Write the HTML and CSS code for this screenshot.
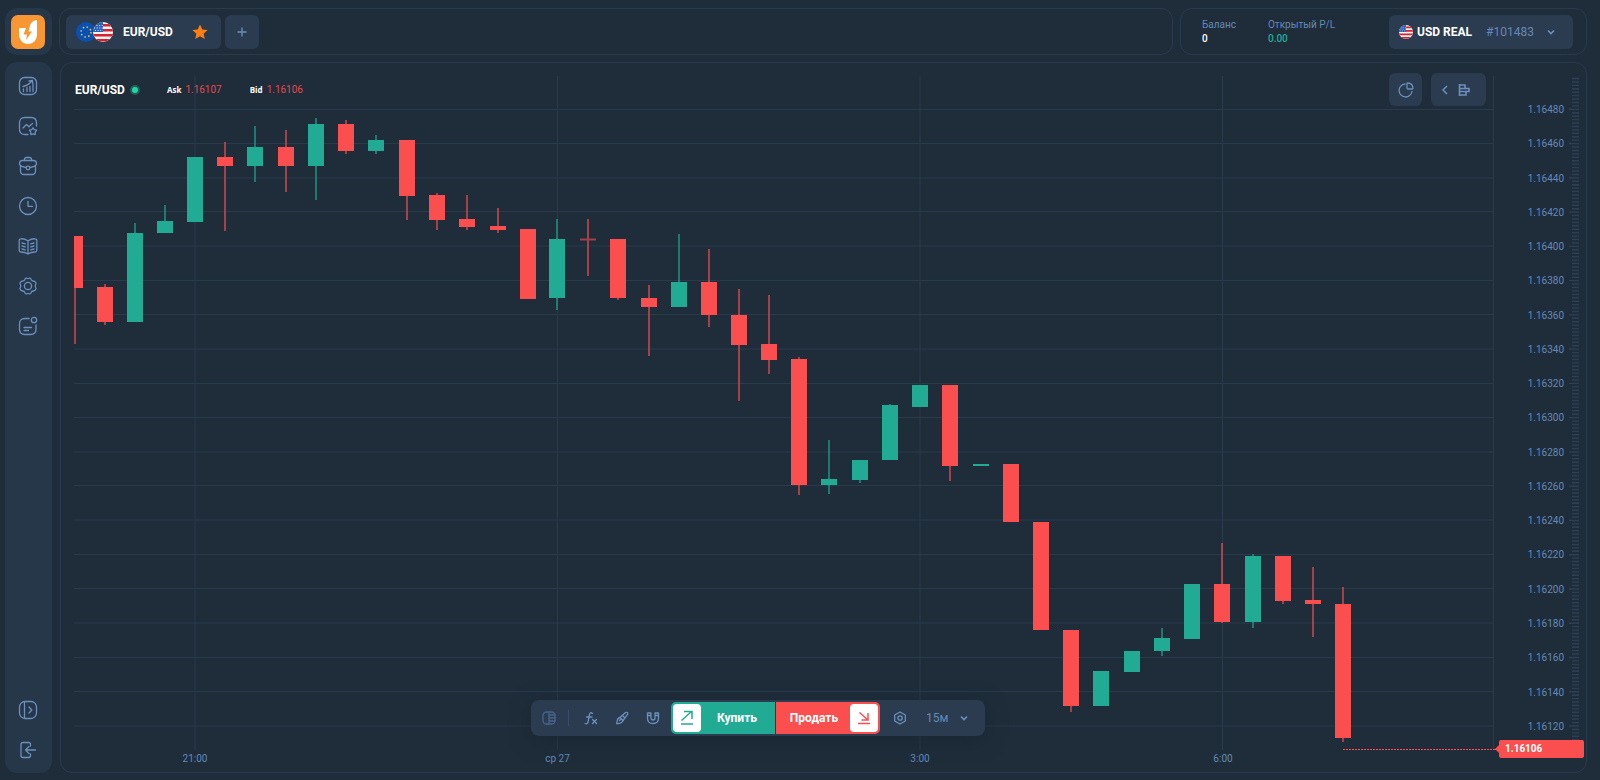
FILE: index.html
```html
<!DOCTYPE html>
<html lang="ru">
<head>
<meta charset="utf-8">
<title>EUR/USD</title>
<link rel="stylesheet" href="styles.css">
</head>
<body>
<svg class="defs" aria-hidden="true">
  <symbol id="flag-us" viewBox="0 0 20 20">
    <clipPath id="disc"><circle cx="10" cy="10" r="10"/></clipPath>
    <g clip-path="url(#disc)">
      <rect width="20" height="20" fill="#f5f5f5"/>
      <path d="M0 3.3H20M0 8.3H20M0 13.3H20M0 18.3H20" stroke="#d8232f" stroke-width="2.5"/>
      <rect width="10" height="10" fill="#2a61b8"/>
      <path d="M3.5 3.5H10M1 6H10M2 8.5H10" stroke="#dce6f5" stroke-width="1" stroke-dasharray="1 1.6"/>
    </g>
  </symbol>
  <symbol id="chevron" viewBox="0 0 8 8"><path d="M1 2.5L4 5.5L7 2.5" fill="none" stroke="currentColor" stroke-width="1.7"/></symbol>
</svg>

<header class="topbar">
  <a class="logo" href="#" aria-label="Главная">
    <svg viewBox="0 0 34 34" width="34" height="34">
      <rect width="34" height="34" rx="7" fill="#f99634"/>
      <path d="M8 13H15L12.500 19.500H16L15 25L21 16.500H17.500L19.500 9Q21.500 5.500 26 5V19C26 25.500 22 29 17 29S8 25 8 19Z" fill="#fff"/>
    </svg>
  </a>
  <nav class="tabs">
    <button class="tab">
      <svg class="pair" viewBox="0 0 38 20" width="38" height="20">
        <circle cx="10" cy="10" r="10" fill="#0a50b0"/>
        <circle cx="10" cy="10" r="5" fill="none" stroke="#e9c94a" stroke-width="1.500" stroke-dasharray="1.500 2.427"/>
        <use href="#flag-us" x="17" width="20" height="20"/>
      </svg>
      <span class="tab-name">EUR/USD</span>
      <svg viewBox="0 0 16 16" width="16" height="16"><path d="M8 .5L10.300 5.500L15.600 6L11.600 9.700L12.800 15L8 12.200L3.200 15L4.400 9.700L.4 6L5.700 5.500Z" fill="#ff7f0e"/></svg>
    </button>
    <button class="add" aria-label="Добавить">
      <svg viewBox="0 0 10 10" width="10" height="10"><path d="M5 .5V9.500M.5 5H9.500" stroke="currentColor" stroke-width="1.300"/></svg>
    </button>
  </nav>
  <section class="account">
    <dl class="stat"><dt>Баланс</dt><dd>0</dd></dl>
    <dl class="stat"><dt>Открытый P/L</dt><dd class="gain">0.00</dd></dl>
    <button class="account-pick" aria-haspopup="listbox">
      <svg width="14" height="14"><use href="#flag-us" width="14" height="14"/></svg>
      <span class="account-name">USD REAL</span>
      <span class="account-id">#101483</span>
      <svg width="8" height="8"><use href="#chevron"/></svg>
    </button>
  </section>
</header>

<div class="workspace">
  <aside class="sidebar">
    <button aria-label="График"><svg class="icon" viewBox="0 0 20 20"><rect x="1.500" y="1.500" width="17" height="17" rx="5"/><path d="M5.500 15.500V13M9 15.500V11.500M12 15.500V10.500M15 15.500V8.500M5 10.500Q10 9.500 14 5M11 5L14.500 4.500L14.800 7.800"/></svg></button>
    <button aria-label="Избранное"><svg class="icon" viewBox="0 0 20 20"><path d="M10 18.500H7Q1.500 18.500 1.500 13V7Q1.500 1.500 7 1.500H13Q18.500 1.500 18.500 7V10"/><path d="M5 12L8.500 8.500L11 10.800L14.500 7.500"/><path d="M15 11.800L16.300 13.600L18.600 14.200L17.200 16.200V18.600L15 17.900L12.800 18.600V16.200L11.400 14.200L13.700 13.600Z"/></svg></button>
    <button aria-label="Портфель"><svg class="icon" viewBox="0 0 20 20"><path d="M6.500 4.500V3.500Q6.500 1.500 8.500 1.500H11.500Q13.500 1.500 13.500 3.500V4.500"/><path d="M4.500 4.500H15.500Q18.500 4.500 18.500 8Q18 10.500 12 11.500M8 11.500Q2 10.500 1.500 8Q1.500 4.500 4.500 4.500"/><path d="M2.500 10V15Q2.500 18.500 6 18.500H14Q17.500 18.500 17.500 15V10"/><circle cx="10" cy="12" r="1.800"/></svg></button>
    <button aria-label="История"><svg class="icon" viewBox="0 0 20 20"><circle cx="10" cy="10" r="8.500"/><path d="M10 5.500V10.300H14.500"/></svg></button>
    <button aria-label="Обучение"><svg class="icon" viewBox="0 0 20 20"><path d="M10 4.800Q6 2.500 3 2.800Q1.200 2.800 1.200 4.500V14.500Q1.200 16 3 16Q7 16 10 18Q13 16 17 16Q18.800 16 18.800 14.500V4.500Q18.800 2.800 17 2.800Q14 2.500 10 4.800V18M4 7L7.300 7.800M4 10L7.300 10.800M4 13L7.300 13.800M16 7L12.700 7.800M16 10L12.700 10.800M16 13L12.700 13.800"/></svg></button>
    <button aria-label="Настройки"><svg class="icon" viewBox="0 0 20 20"><path d="M7 3Q7.800 1.800 8.800 2.200Q10 2.900 11.200 2.200Q12.200 1.800 13 3L13.400 4Q13.900 5 15.200 5Q16.700 5 17.600 6.300Q18.600 7.500 17.600 8.500Q16.800 10 17.600 11.500Q18.600 12.500 17.600 13.700Q16.700 15 15.200 15Q13.900 15 13.400 16L13 17Q12.200 18.200 11.200 17.800Q10 17.100 8.800 17.800Q7.800 18.200 7 17L6.600 16Q6.100 15 4.800 15Q3.300 15 2.400 13.700Q1.400 12.500 2.400 11.500Q3.200 10 2.400 8.500Q1.400 7.500 2.400 6.300Q3.300 5 4.800 5Q6.100 5 6.600 4Z"/><circle cx="10" cy="10" r="3.600"/></svg></button>
    <button aria-label="Новости"><svg class="icon" viewBox="0 0 20 20"><path d="M11 2.500H7Q1.500 2.500 1.500 8V13Q1.500 18.500 7 18.500H12.500Q18 18.500 18 13V9"/><circle cx="16" cy="4" r="2.700"/><path d="M6 11.500H13.500M6 14.500H10.500"/></svg></button>
    <button class="push" aria-label="Развернуть"><svg class="icon" viewBox="0 0 20 20"><rect x="1.500" y="1.500" width="17" height="17" rx="5.500"/><path d="M6.500 1.800V18.200M11 7L13.800 10L11 13"/></svg></button>
    <button aria-label="Выход"><svg class="icon" viewBox="0 0 20 20"><path d="M12.500 6V4.500Q12.500 2.500 10.500 2.500H5Q3 2.500 3 4.500V15.500Q3 17.500 5 17.500H10.500Q12.500 17.500 12.500 15.500V14M17.500 10H7.800M11 6.500L7.500 10L11 13.500"/></svg></button>
  </aside>

  <main class="chart">
    <svg class="plot" viewBox="74 76 1420 674" preserveAspectRatio="none" role="img" aria-label="Свечной график EUR/USD">
      <path class="grid" d="M74 109.500H1494M74 143.500H1494M74 178H1494M74 211.500H1494M74 246H1494M74 280.500H1494M74 314.500H1494M74 349H1494M74 383.500H1494M74 417.500H1494M74 452H1494M74 485.500H1494M74 520H1494M74 554.500H1494M74 588.500H1494M74 623H1494M74 657.500H1494M74 691.500H1494M74 726H1494M195 76V750M557.500 76V750M920 76V750M1222.500 76V750M1493.500 76V750"/>
      <path class="wick down" d="M75 288V344M105 284V325M225 142V231M286 130V192M346 120V154M407 196V220M437 193V230M467 195V230M498 208V233M588 219V276M618 298V300M649 285V356M709 249V327M739 289V401M769 295V374M799 357V495M950 466V481M1071 706V712M1222 543V623M1283 601V604M1313 567V637M1343 587V742M580 239.500H596"/>
      <path class="wick up" d="M135 223V233M165 205V221M195 157V157M255 126V182M316 118V200M376 135V154M557 219V310M679 234V282M829 440V494M860 480V483M890 404V405M1162 628V656M1253 554V628"/>
      <path class="body down" d="M75 236V288M105 287V322M225 157V166M286 147V166M346 124V151M407 140V196M437 195V220M467 219V227M498 226V230M528 229V299M618 239V298M649 298V307M709 282V315M739 315V345M769 344V360M799 359V485M950 385V466M1011 464V522M1041 522V630M1071 630V706M1222 584V622M1283 556V601M1313 600V604M1343 604V738"/>
      <path class="body up" d="M135 233V322M165 221V233M195 157V222M255 147V166M316 124V166M376 140V151M557 239V298M679 282V307M829 479V485M860 460V480M890 405V460M920 385V407M981 464V466M1101 671V706M1132 651V672M1162 638V651M1192 584V639M1253 556V622"/>
      <path class="current" d="M1343 749.500H1494"/>
    </svg>

    <div class="axis">
      <ol class="prices">
        <li>1.16480</li><li>1.16460</li><li>1.16440</li><li>1.16420</li><li>1.16400</li><li>1.16380</li><li>1.16360</li><li>1.16340</li><li>1.16320</li><li>1.16300</li><li>1.16280</li><li>1.16260</li><li>1.16240</li><li>1.16220</li><li>1.16200</li><li>1.16180</li><li>1.16160</li><li>1.16140</li><li>1.16120</li>
      </ol>
      <svg class="ruler" viewBox="0 76 10 674" preserveAspectRatio="none" aria-hidden="true">
        <path d="M6.500 77.800V740" stroke-width="7" stroke-dasharray="1.400 2.026"/>
        <path d="M1.500 108.600V728" stroke-width="3" stroke-dasharray="1.400 32.860"/>
      </svg>
      <output class="price-tag">1.16106</output>
    </div>

    <ol class="times">
      <li>21:00</li><li>ср 27</li><li>3:00</li><li>6:00</li>
    </ol>

    <div class="quote">
      <h1>EUR/USD</h1>
      <i class="live"></i>
      <span class="side"><b>Ask</b>1.16107</span>
      <span class="side"><b>Bid</b>1.16106</span>
    </div>

    <div class="views">
      <button aria-label="Доли"><svg class="icon small" viewBox="0 0 16 16"><path d="M7 2A6.500 6.500 0 1 0 14 9.500"/><path d="M9.500 1Q14.800 1 15 6.500Q15 7 14 7H10Q9 7 9 6V1.800Q9 1 9.500 1Z"/></svg></button>
      <button class="wide" aria-label="Стакан"><svg viewBox="0 0 8 10" width="8" height="10"><path d="M6 1L2 5L6 9" fill="none" stroke="currentColor" stroke-width="1.500"/></svg><svg viewBox="0 0 12 12" width="12" height="12"><path d="M1.500 0V12M1.500 1H7V4.500H1.500M1.500 4.500H11V7.500H1.500M1.500 7.500H8V11H1.500" fill="none" stroke="currentColor" stroke-width="1.600"/></svg></button>
    </div>

    <div class="dock">
      <div class="toolbar">
        <button class="tool dim" aria-label="Панель"><svg class="icon tiny" viewBox="0 0 14 14"><rect x="1" y="1" width="12" height="12" rx="3.500"/><path d="M7 1V13M7 4H13M7 7H13M7 10H13"/></svg></button>
        <i class="rule"></i>
        <button class="tool" aria-label="Индикаторы"><svg class="icon tiny" viewBox="0 0 14 14"><path d="M8.500 2.500Q6 .5 5.400 4L4 11Q3.500 13.500 1 12.500M2.500 6H8M8.500 8.500L12.500 12.500M12.500 8.500L8.500 12.500"/></svg></button>
        <button class="tool" aria-label="Рисование"><svg class="icon tiny" viewBox="0 0 14 14"><path d="M5 6.500L10.500 1.500Q13 .7 12.800 3.200L8 9.500"/><path d="M5 6.500Q2.500 7 2.200 10Q2 11.500 1.500 12.500Q6.500 13 8 9.500"/><path d="M5 6.500L8 9.500M7.500 4.500L9.700 6.800M4.500 9.500L6.500 8"/></svg></button>
        <button class="tool" aria-label="Магнит"><svg class="icon tiny" viewBox="0 0 14 14"><path d="M1.500 2H5V7Q5 9 7 9T9 7V2H12.500V7Q12.500 12.500 7 12.500T1.500 7ZM1.500 4.500H5M9 4.500H12.500"/></svg></button>
        <div class="trade">
          <button class="buy"><span class="chip"><svg viewBox="0 0 14 16" width="14" height="16"><path d="M1.500 10.500L11.500 1.500M4 1.500H12V9M1 14H13"/></svg></span><span class="label">Купить</span></button>
          <button class="sell"><span class="label">Продать</span><span class="chip"><svg viewBox="0 0 14 16" width="14" height="16"><path d="M2.500 2.500L10.500 9.500M11 3V10H4.500M1 13.500H13"/></svg></span></button>
        </div>
        <button class="tool" aria-label="Параметры"><svg class="icon tiny" viewBox="0 0 14 14"><path d="M7 1L12.300 4V10L7 13L1.700 10V4Z"/><circle cx="7" cy="7" r="2.200"/></svg></button>
        <label class="frame">
          <select aria-label="Таймфрейм"><option>15м</option><option>30м</option></select>
          <svg width="8" height="8"><use href="#chevron"/></svg>
        </label>
      </div>
    </div>
  </main>
</div>
</body>
</html>
```
FILE: styles.css
```css
:root {
  --bg: #1f2d3b;
  --line: #293a4e;
  --panel: #27374a;
  --control: #2b3b50;
  --muted: #6489b5;
  --icon: #6b90bb;
  --up: #22ab94;
  --down: #fb4f4f;
}

* { box-sizing: border-box; margin: 0; padding: 0; }

body {
  display: flex;
  flex-direction: column;
  gap: 7px;
  height: 100vh;
  padding: 8px 13px 7px 5px;
  background: var(--bg);
  color: #fff;
  font: 12px/14px Roboto, "Liberation Sans", sans-serif;
}

button, select {
  border: 0;
  background: none;
  color: inherit;
  font: inherit;
  cursor: pointer;
}

svg { display: block; flex: none; }
ol { list-style: none; }
.defs { position: absolute; width: 0; height: 0; }

.icon {
  width: 20px;
  height: 20px;
  fill: none;
  stroke: currentColor;
  stroke-width: 1.3;
  stroke-linecap: round;
  stroke-linejoin: round;
}
.small { width: 16px; height: 16px; }
.tiny { width: 14px; height: 14px; }

/* Top bar */
.topbar { display: flex; gap: 7px; height: 47px; }

.logo {
  display: grid;
  place-items: center;
  width: 47px;
  padding-right: 1px;
  border-radius: 12px;
  background: var(--panel);
}

.tabs, .account {
  display: flex;
  align-items: center;
  border: 1px solid var(--line);
  border-radius: 12px;
}

.tabs { flex: 1; gap: 4px; padding: 0 6px; }

.tab, .add, .account-pick {
  display: flex;
  align-items: center;
  height: 34px;
  border-radius: 6px;
  background: var(--control);
}
.tab { width: 155px; padding: 0 13px 0 10px; }
.tab-name { flex: 1; padding-left: 9px; text-align: left; font-weight: 700; }
.add { justify-content: center; width: 34px; color: var(--icon); }

.account { width: 407px; padding: 0 13px 0 21px; }
.stat { margin-right: 32px; font-size: 10px; }
.stat dt { color: var(--muted); }
.stat dd { font-weight: 500; }
.stat .gain { color: var(--up); }
.account-pick { width: 184px; margin-left: auto; padding: 0 18px 0 10px; }
.account-name { padding: 0 14px 0 4px; font-weight: 700; }
.account-id { flex: 1; color: var(--muted); text-align: left; }
.account-pick svg:last-child { color: var(--icon); }

/* Workspace */
.workspace { display: flex; flex: 1; gap: 8px; min-height: 0; }

.sidebar {
  display: flex;
  flex-direction: column;
  width: 47px;
  padding: 4px 1px 3px 0;
  border-radius: 12px;
  background: var(--panel);
  color: var(--icon);
}
.sidebar button { display: grid; place-items: center; height: 40px; }
.sidebar .push { margin-top: auto; }

.chart {
  position: relative;
  display: grid;
  flex: 1;
  grid-template: minmax(0, 1fr) 22px / minmax(0, 1fr) 92px;
  min-width: 0;
  padding: 13px 0 0 13px;
  border: 1px solid var(--line);
  border-radius: 12px;
}

.plot { width: 100%; height: 100%; }
.grid { fill: none; stroke: #293a4d; stroke-width: 1; }
.wick { fill: none; stroke-width: 2; opacity: 0.6; }
.body { fill: none; stroke-width: 16; }
.up { stroke: var(--up); }
.down { stroke: var(--down); }
.current { stroke: var(--down); stroke-dasharray: 2 1; }

.axis { position: relative; display: flex; justify-content: flex-end; padding-right: 7px; }
.prices {
  display: flex;
  flex-direction: column;
  justify-content: space-between;
  padding: 27px 5px 16px 0;
  color: var(--muted);
  font-size: 10px;
}
.ruler { width: 10px; height: 100%; fill: none; stroke: #2e3f54; }

.price-tag {
  position: absolute;
  right: 2px;
  bottom: -8px;
  left: 5px;
  padding: 2px 6px;
  border-radius: 2px;
  background: var(--down);
  font-size: 10px;
  font-weight: 700;
}
.price-tag::before {
  content: "";
  position: absolute;
  top: 5px;
  left: -4px;
  border: 4px solid transparent;
  border-left: 0;
  border-right-color: var(--down);
}
.price-tag::after {
  content: "";
  position: absolute;
  top: 9px;
  right: 100%;
  width: 5px;
  border-top: 1px dashed var(--down);
}

.times {
  display: grid;
  grid-template-columns: 242fr 483fr 242fr 364fr 89fr;
  padding-top: 2px;
  color: var(--muted);
  font-size: 10px;
  text-align: center;
}

/* Panels floating over the plot */
.quote {
  position: absolute;
  top: 20px;
  left: 14px;
  display: flex;
  align-items: center;
}
.quote h1 { font-size: 12px; }
.live {
  width: 10px;
  height: 10px;
  margin: 0 27px 0 5px;
  border: 2px solid #20605f;
  border-radius: 50%;
  background: #1fd6a4;
}
.side { margin-right: 28px; color: #e04a4e; font-size: 10px; }
.side b { margin-right: 4px; color: #fff; font: 700 8px/14px "Open Sans", sans-serif; }

.views {
  position: absolute;
  top: 10px;
  right: 100px;
  display: flex;
  gap: 9px;
  color: var(--icon);
}
.views button {
  display: flex;
  align-items: center;
  justify-content: center;
  width: 33px;
  height: 33px;
  border-radius: 6px;
  background: var(--control);
}
.views .wide { justify-content: flex-start; gap: 9px; width: 55px; padding-left: 10px; }

.dock {
  position: absolute;
  right: 144px;
  bottom: 36px;
  left: 13px;
  display: flex;
  justify-content: center;
}
.toolbar {
  display: flex;
  align-items: center;
  height: 36px;
  padding: 0 2px;
  border-radius: 8px;
  background: var(--control);
  box-shadow: 0 4px 20px rgba(20, 30, 42, 0.5);
  color: var(--icon);
}
.tool { display: grid; place-items: center; width: 31px; height: 32px; }
.dim { color: #46658b; }
.rule { width: 1px; height: 16px; margin: 0 6px 0 4px; background: #3a4d66; }

.trade { display: flex; gap: 1px; margin: 0 4px 0 3px; color: #fff; font-weight: 700; }
.buy, .sell { display: flex; align-items: center; width: 104px; height: 32px; padding: 2px; }
.buy { border-radius: 5px 0 0 5px; background: var(--up); }
.sell { border-radius: 0 5px 5px 0; background: var(--down); }
.label { flex: 1; text-align: center; }
.chip { display: grid; place-items: center; width: 28px; height: 28px; border-radius: 4px; background: #fff; }
.chip svg { fill: none; stroke: var(--up); stroke-width: 1.5; }
.sell .chip svg { stroke: var(--down); }

.frame { display: flex; align-items: center; padding: 0 15px 0 11px; }
.frame select { width: 34px; appearance: none; color: var(--muted); outline: 0; }
```
